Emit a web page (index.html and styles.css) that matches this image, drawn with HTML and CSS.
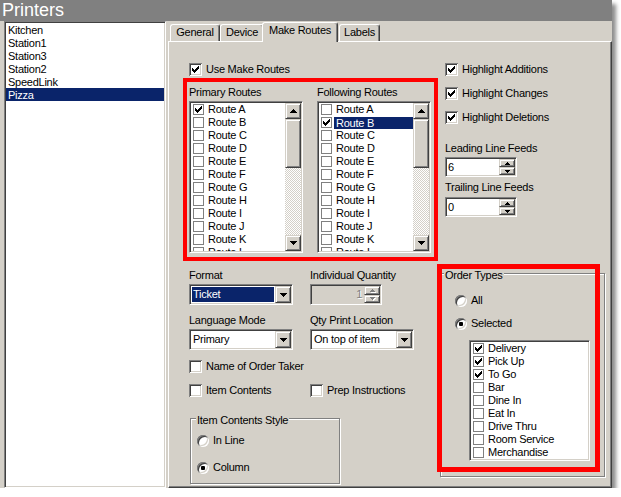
FILE: index.html
```html
<!DOCTYPE html>
<html>
<head>
<meta charset="utf-8">
<link rel="stylesheet" href="styles.css">
</head>
<body>
<div class="window">
  <div class="titlebar">Printers</div>
  <div class="main">
    <div class="printer-list sunken">
      <div class="li">Kitchen</div>
      <div class="li">Station1</div>
      <div class="li">Station3</div>
      <div class="li">Station2</div>
      <div class="li">SpeedLink</div>
      <div class="li sel">Pizza</div>
    </div>
    <div class="tabarea">
      <div class="tabs">
        <div class="tab t-general">General</div>
        <div class="tab t-device">Device</div>
        <div class="tab active t-routes">Make Routes</div>
        <div class="tab t-labels">Labels</div>
      </div>
      <div class="panel">
        <div class="col-left">
          <div class="chk-row use-routes">
            <span class="cb"><svg width="7" height="7" viewBox="0 0 7 7"><path d="M6 0h1v1h-1zM5 1h2v1h-2zM0 2h1v1h-1zM4 2h3v1h-3zM0 3h2v1h-2zM3 3h3v1h-3zM0 4h5v1h-5zM1 5h3v1h-3zM2 6h1v1h-1z"/></svg></span>
            <span>Use Make Routes</span>
          </div>
          <div class="routes-box">
            <div class="routes-col">
              <div class="lbl">Primary Routes</div>
              <div class="rlist sunken">
                <div class="items">
                  <div class="item"><span class="fcb"><svg width="7" height="7" viewBox="0 0 7 7"><path d="M6 0h1v1h-1zM5 1h2v1h-2zM0 2h1v1h-1zM4 2h3v1h-3zM0 3h2v1h-2zM3 3h3v1h-3zM0 4h5v1h-5zM1 5h3v1h-3zM2 6h1v1h-1z"/></svg></span><span class="itxt">Route A</span></div>
                  <div class="item"><span class="fcb"></span><span class="itxt">Route B</span></div>
                  <div class="item"><span class="fcb"></span><span class="itxt">Route C</span></div>
                  <div class="item"><span class="fcb"></span><span class="itxt">Route D</span></div>
                  <div class="item"><span class="fcb"></span><span class="itxt">Route E</span></div>
                  <div class="item"><span class="fcb"></span><span class="itxt">Route F</span></div>
                  <div class="item"><span class="fcb"></span><span class="itxt">Route G</span></div>
                  <div class="item"><span class="fcb"></span><span class="itxt">Route H</span></div>
                  <div class="item"><span class="fcb"></span><span class="itxt">Route I</span></div>
                  <div class="item"><span class="fcb"></span><span class="itxt">Route J</span></div>
                  <div class="item"><span class="fcb"></span><span class="itxt">Route K</span></div>
                  <div class="item"><span class="fcb"></span><span class="itxt">Route L</span></div>
                </div>
                <div class="scrollbar">
                  <div class="sb-btn raised"><svg width="7" height="4" viewBox="0 0 7 4"><path d="M3 0h1v1h-1zM2 1h3v1h-3zM1 2h5v1h-5zM0 3h7v1h-7z"/></svg></div>
                  <div class="sb-thumb raised"></div>
                  <div class="sb-track"></div>
                  <div class="sb-btn raised"><svg width="7" height="4" viewBox="0 0 7 4"><path d="M0 0h7v1h-7zM1 1h5v1h-5zM2 2h3v1h-3zM3 3h1v1h-1z"/></svg></div>
                </div>
              </div>
            </div>
            <div class="routes-col">
              <div class="lbl">Following Routes</div>
              <div class="rlist sunken">
                <div class="items">
                  <div class="item"><span class="fcb"></span><span class="itxt">Route A</span></div>
                  <div class="item"><span class="fcb"><svg width="7" height="7" viewBox="0 0 7 7"><path d="M6 0h1v1h-1zM5 1h2v1h-2zM0 2h1v1h-1zM4 2h3v1h-3zM0 3h2v1h-2zM3 3h3v1h-3zM0 4h5v1h-5zM1 5h3v1h-3zM2 6h1v1h-1z"/></svg></span><span class="itxt sel">Route B</span></div>
                  <div class="item"><span class="fcb"></span><span class="itxt">Route C</span></div>
                  <div class="item"><span class="fcb"></span><span class="itxt">Route D</span></div>
                  <div class="item"><span class="fcb"></span><span class="itxt">Route E</span></div>
                  <div class="item"><span class="fcb"></span><span class="itxt">Route F</span></div>
                  <div class="item"><span class="fcb"></span><span class="itxt">Route G</span></div>
                  <div class="item"><span class="fcb"></span><span class="itxt">Route H</span></div>
                  <div class="item"><span class="fcb"></span><span class="itxt">Route I</span></div>
                  <div class="item"><span class="fcb"></span><span class="itxt">Route J</span></div>
                  <div class="item"><span class="fcb"></span><span class="itxt">Route K</span></div>
                  <div class="item"><span class="fcb"></span><span class="itxt">Route L</span></div>
                </div>
                <div class="scrollbar">
                  <div class="sb-btn raised"><svg width="7" height="4" viewBox="0 0 7 4"><path d="M3 0h1v1h-1zM2 1h3v1h-3zM1 2h5v1h-5zM0 3h7v1h-7z"/></svg></div>
                  <div class="sb-thumb raised"></div>
                  <div class="sb-track"></div>
                  <div class="sb-btn raised"><svg width="7" height="4" viewBox="0 0 7 4"><path d="M0 0h7v1h-7zM1 1h5v1h-5zM2 2h3v1h-3zM3 3h1v1h-1z"/></svg></div>
                </div>
              </div>
            </div>
          </div>

          <div class="form">
            <div class="frow">
              <div class="field">
                <div class="lbl">Format</div>
                <div class="combo sunken">
                  <div class="val sel">Ticket</div>
                  <div class="dd raised"><svg width="7" height="4" viewBox="0 0 7 4"><path d="M0 0h7v1h-7zM1 1h5v1h-5zM2 2h3v1h-3zM3 3h1v1h-1z"/></svg></div>
                </div>
              </div>
              <div class="field">
                <div class="lbl">Individual Quantity</div>
                <div class="qspin sunken">
                  <div class="qval">1</div>
                  <div class="qbtns">
                    <div class="qbtn raised"><svg width="5" height="3" viewBox="0 0 5 3"><path d="M2 0h1v1h-1zM1 1h3v1h-3zM0 2h5v1h-5z"/></svg></div>
                    <div class="qbtn raised"><svg width="5" height="3" viewBox="0 0 5 3"><path d="M0 0h5v1h-5zM1 1h3v1h-3zM2 2h1v1h-1z"/></svg></div>
                  </div>
                </div>
              </div>
            </div>
            <div class="frow frow2">
              <div class="field">
                <div class="lbl">Language Mode</div>
                <div class="combo sunken">
                  <div class="val">Primary</div>
                  <div class="dd raised"><svg width="7" height="4" viewBox="0 0 7 4"><path d="M0 0h7v1h-7zM1 1h5v1h-5zM2 2h3v1h-3zM3 3h1v1h-1z"/></svg></div>
                </div>
              </div>
              <div class="field">
                <div class="lbl">Qty Print Location</div>
                <div class="combo sunken">
                  <div class="val">On top of item</div>
                  <div class="dd raised"><svg width="7" height="4" viewBox="0 0 7 4"><path d="M0 0h7v1h-7zM1 1h5v1h-5zM2 2h3v1h-3zM3 3h1v1h-1z"/></svg></div>
                </div>
              </div>
            </div>
            <div class="chk-row name-row">
              <span class="cb"></span><span>Name of Order Taker</span>
            </div>
            <div class="ic-row">
              <div class="chk-row"><span class="cb"></span><span>Item Contents</span></div>
              <div class="chk-row"><span class="cb"></span><span>Prep Instructions</span></div>
            </div>
          </div>

          <div class="group ics">
            <div class="gtitle">Item Contents Style</div>
            <div class="radio-row r-first"><span class="radio"></span><span>In Line</span></div>
            <div class="radio-row r-second"><span class="radio on"><span class="dot"></span></span><span>Column</span></div>
          </div>
        </div>

        <div class="col-right">
          <div class="chk-row hl"><span class="cb"><svg width="7" height="7" viewBox="0 0 7 7"><path d="M6 0h1v1h-1zM5 1h2v1h-2zM0 2h1v1h-1zM4 2h3v1h-3zM0 3h2v1h-2zM3 3h3v1h-3zM0 4h5v1h-5zM1 5h3v1h-3zM2 6h1v1h-1z"/></svg></span><span>Highlight Additions</span></div>
          <div class="chk-row hl hl-next"><span class="cb"><svg width="7" height="7" viewBox="0 0 7 7"><path d="M6 0h1v1h-1zM5 1h2v1h-2zM0 2h1v1h-1zM4 2h3v1h-3zM0 3h2v1h-2zM3 3h3v1h-3zM0 4h5v1h-5zM1 5h3v1h-3zM2 6h1v1h-1z"/></svg></span><span>Highlight Changes</span></div>
          <div class="chk-row hl hl-next"><span class="cb"><svg width="7" height="7" viewBox="0 0 7 7"><path d="M6 0h1v1h-1zM5 1h2v1h-2zM0 2h1v1h-1zM4 2h3v1h-3zM0 3h2v1h-2zM3 3h3v1h-3zM0 4h5v1h-5zM1 5h3v1h-3zM2 6h1v1h-1z"/></svg></span><span>Highlight Deletions</span></div>

          <div class="feed-lbl">Leading Line Feeds</div>
          <div class="fspin sunken">
            <div class="fval">6</div>
            <div class="fbtns">
              <div class="fbtn raised"><svg width="5" height="3" viewBox="0 0 5 3"><path d="M2 0h1v1h-1zM1 1h3v1h-3zM0 2h5v1h-5z"/></svg></div>
              <div class="fbtn raised"><svg width="5" height="3" viewBox="0 0 5 3"><path d="M0 0h5v1h-5zM1 1h3v1h-3zM2 2h1v1h-1z"/></svg></div>
            </div>
          </div>
          <div class="feed-lbl feed-lbl2">Trailing Line Feeds</div>
          <div class="fspin fspin2 sunken">
            <div class="fval">0</div>
            <div class="fbtns">
              <div class="fbtn raised"><svg width="5" height="3" viewBox="0 0 5 3"><path d="M2 0h1v1h-1zM1 1h3v1h-3zM0 2h5v1h-5z"/></svg></div>
              <div class="fbtn raised"><svg width="5" height="3" viewBox="0 0 5 3"><path d="M0 0h5v1h-5zM1 1h3v1h-3zM2 2h1v1h-1z"/></svg></div>
            </div>
          </div>

          <div class="group order-box">
            <div class="gtitle">Order Types</div>
            <div class="radio-row o-all"><span class="radio"></span><span>All</span></div>
            <div class="radio-row o-sel"><span class="radio on"><span class="dot"></span></span><span>Selected</span></div>
            <div class="olist sunken">
              <div class="item"><span class="fcb"><svg width="7" height="7" viewBox="0 0 7 7"><path d="M6 0h1v1h-1zM5 1h2v1h-2zM0 2h1v1h-1zM4 2h3v1h-3zM0 3h2v1h-2zM3 3h3v1h-3zM0 4h5v1h-5zM1 5h3v1h-3zM2 6h1v1h-1z"/></svg></span><span class="itxt">Delivery</span></div>
              <div class="item"><span class="fcb"><svg width="7" height="7" viewBox="0 0 7 7"><path d="M6 0h1v1h-1zM5 1h2v1h-2zM0 2h1v1h-1zM4 2h3v1h-3zM0 3h2v1h-2zM3 3h3v1h-3zM0 4h5v1h-5zM1 5h3v1h-3zM2 6h1v1h-1z"/></svg></span><span class="itxt">Pick Up</span></div>
              <div class="item"><span class="fcb"><svg width="7" height="7" viewBox="0 0 7 7"><path d="M6 0h1v1h-1zM5 1h2v1h-2zM0 2h1v1h-1zM4 2h3v1h-3zM0 3h2v1h-2zM3 3h3v1h-3zM0 4h5v1h-5zM1 5h3v1h-3zM2 6h1v1h-1z"/></svg></span><span class="itxt">To Go</span></div>
              <div class="item"><span class="fcb"></span><span class="itxt">Bar</span></div>
              <div class="item"><span class="fcb"></span><span class="itxt">Dine In</span></div>
              <div class="item"><span class="fcb"></span><span class="itxt">Eat In</span></div>
              <div class="item"><span class="fcb"></span><span class="itxt">Drive Thru</span></div>
              <div class="item"><span class="fcb"></span><span class="itxt">Room Service</span></div>
              <div class="item"><span class="fcb"></span><span class="itxt">Merchandise</span></div>
            </div>
            <div class="red-ann"></div>
          </div>
        </div>
      </div>
    </div>
  </div>
</div>
</body>
</html>
```

FILE: styles.css
```css
* { box-sizing: border-box; }

body {
  margin: 0;
  background: #fff;
  font-family: "Liberation Sans", Arial, sans-serif;
  font-size: 11px;
  letter-spacing: -0.25px;
  color: #000;
}

svg { display: block; shape-rendering: crispEdges; }

.window {
  width: 612px;
  height: 488px;
  background: #d4d0c8;
  display: flex;
  flex-direction: column;
  box-shadow: 4px 4px 4px rgba(0, 0, 0, 0.45);
}

.titlebar {
  height: 21px;
  background: #808080;
  color: #fff;
  font-size: 18px;
  line-height: 21px;
  padding-left: 2px;
  letter-spacing: 0;
}

.main {
  flex: 1;
  display: flex;
  min-height: 0;
}

.sunken {
  border: 1px solid;
  border-color: #808080 #fff #fff #808080;
  box-shadow: inset 1px 1px #404040, inset -1px -1px #d4d0c8;
  padding: 1px;
  background: #fff;
}

.raised {
  border: 1px solid;
  border-color: #d4d0c8 #404040 #404040 #d4d0c8;
  box-shadow: inset 1px 1px #fff, inset -1px -1px #808080;
  background: #d4d0c8;
}

/* left printer list */
.printer-list {
  width: 162px;
  margin-left: 4px;
}
.printer-list .li {
  height: 13px;
  line-height: 13px;
  padding-left: 2px;
  padding-top: 1px;
  white-space: nowrap;
}
.printer-list .li.sel {
  background: #0a246a;
  color: #fff;
}

/* tabs */
.tabarea {
  flex: 1;
  margin-left: 2px;
  display: flex;
  flex-direction: column;
  min-width: 0;
}
.tabs {
  height: 20px;
  flex: none;
  display: flex;
  align-items: flex-start;
  padding-left: 2px;
}
.tab {
  margin-top: 3px;
  height: 17px;
  border: 1px solid;
  border-bottom: none;
  border-color: #fff #404040 transparent #fff;
  box-shadow: inset -1px 0 #808080;
  border-radius: 3px 3px 0 0;
  text-align: center;
  line-height: 13px;
  padding-top: 1px;
  white-space: nowrap;
}
.t-general { width: 50px; }
.t-device { width: 44px; }
.t-routes { width: 76px; margin-left: -2px; }
.t-labels { width: 41px; margin-left: 1px; }
.tab.active {
  margin-top: 1px;
  height: 20px;
  position: relative;
  z-index: 1;
  background: #d4d0c8;
}

.panel {
  flex: 1;
  border: 1px solid;
  border-color: #fff #404040 #404040 #fff;
  box-shadow: inset -1px -1px #808080;
  display: grid;
  grid-template-columns: 255px 166px;
  column-gap: 2px;
  padding: 21px 0 0 14px;
  align-items: start;
}

/* checkbox */
.chk-row {
  display: flex;
  align-items: center;
  gap: 4px;
  height: 13px;
  line-height: 13px;
  white-space: nowrap;
}
.cb {
  flex: none;
  width: 13px;
  height: 13px;
  background: #fff;
  box-shadow: inset 1px 1px #808080, inset -1px -1px #fff, inset 2px 2px #404040, inset -2px -2px #d4d0c8;
  padding: 3px;
}
.fcb {
  flex: none;
  width: 11px;
  height: 11px;
  border: 1px solid #808080;
  background: #fff;
  padding: 1px;
  margin: 0 2px 0 2px;
}

/* routes */
.use-routes { margin-left: 6px; }
.routes-box {
  margin-top: 2px;
  border: 4px solid #ff0000;
  height: 183px;
  padding: 3px 3px 0 2px;
  display: grid;
  grid-template-columns: 114px 114px;
  column-gap: 14px;
}
.lbl {
  height: 16px;
  line-height: 13px;
  padding-top: 1px;
  white-space: nowrap;
}
.rlist {
  height: 152px;
  display: flex;
  overflow: hidden;
}
.items {
  flex: 1;
  overflow: hidden;
  min-width: 0;
}
.item {
  height: 13px;
  display: flex;
  align-items: center;
  white-space: nowrap;
}
.itxt {
  flex: 1;
  height: 13px;
  line-height: 13px;
  padding-left: 2px;
}
.itxt.sel {
  background: #0a246a;
  color: #fff;
  height: 12px;
  line-height: 12px;
}

.scrollbar {
  width: 16px;
  flex: none;
  display: flex;
  flex-direction: column;
}
.sb-btn {
  height: 16px;
  flex: none;
  display: flex;
  align-items: center;
  justify-content: center;
}
.sb-thumb {
  height: 49px;
  flex: none;
}
.sb-track {
  flex: 1;
  background: repeating-conic-gradient(#d4d0c8 0 25%, #fff 0 50%) 0 0 / 2px 2px;
}

/* format form */
.form {
  margin-left: 6px;
  margin-top: 7px;
}
.frow {
  display: grid;
  grid-template-columns: 121px 104px;
}
.frow2 { margin-top: 8px; }
.combo {
  width: 104px;
  height: 21px;
  display: flex;
}
.combo .val {
  flex: 1;
  line-height: 17px;
  padding-left: 2px;
  white-space: nowrap;
  overflow: hidden;
}
.combo .val.sel {
  margin: 1px 1px 1px 1px;
  line-height: 15px;
  padding-left: 1px;
  background: #0a246a;
  color: #fff;
}
.dd {
  width: 16px;
  height: 17px;
  flex: none;
  display: flex;
  align-items: center;
  justify-content: center;
}
.qspin {
  width: 72px;
  height: 21px;
  display: flex;
  background: #d4d0c8;
}
.qval {
  flex: 1;
  text-align: right;
  line-height: 17px;
  padding-right: 2px;
  color: #808080;
  text-shadow: 1px 1px #fff;
}
.qbtns, .fbtns {
  width: 16px;
  flex: none;
  display: flex;
  flex-direction: column;
}
.qbtn, .fbtn {
  flex: 1;
  display: flex;
  align-items: center;
  justify-content: center;
}
.qbtn svg { fill: #808080; filter: drop-shadow(1px 1px 0 #fff); }

.name-row { margin-top: 10px; }
.ic-row {
  margin-top: 11px;
  display: grid;
  grid-template-columns: 121px auto;
}

/* group boxes */
.group {
  border: 1px solid #808080;
  box-shadow: inset 1px 1px #fff, 1px 1px 0 #fff;
}
.gtitle {
  width: max-content;
  margin-top: -5px;
  padding: 0 1px;
  background: #d4d0c8;
  line-height: 13px;
  height: 13px;
}
.ics {
  margin-left: 7px;
  margin-top: 21px;
  width: 150px;
  height: 66px;
}
.ics .gtitle { margin-left: 5px; }
.radio-row {
  display: flex;
  align-items: center;
  gap: 4px;
  height: 13px;
  line-height: 13px;
  white-space: nowrap;
}
.ics .radio-row { padding-left: 6px; }
.r-first { margin-top: 7px; }
.r-second { margin-top: 14px; }
.radio {
  flex: none;
  width: 12px;
  height: 12px;
  border-radius: 50%;
  background: #fff;
  box-shadow: inset 1px 1px #808080, inset -1px -1px #fff, inset 2px 2px #404040, inset -2px -2px #d4d0c8;
  display: flex;
  align-items: center;
  justify-content: center;
}
.dot {
  width: 4px;
  height: 4px;
  border-radius: 1px;
  background: #000;
}

/* right column */
.col-right > .hl { padding-left: 5px; }
.hl-next { margin-top: 11px; }
.feed-lbl {
  margin-top: 18px;
  padding-left: 5px;
  line-height: 13px;
  height: 13px;
}
.feed-lbl2 { margin-top: 4px; }
.fspin {
  margin-left: 5px;
  margin-top: 2px;
  width: 72px;
  height: 20px;
  display: flex;
}
.fspin2 { margin-top: 3px; }
.fval {
  flex: 1;
  line-height: 16px;
  padding-left: 1px;
}

.order-box {
  position: relative;
  margin-top: 56px;
  width: 165px;
  height: 204px;
}
.order-box .gtitle { margin-left: 3px; }
.order-box .radio-row { padding-left: 14px; }
.o-all { margin-top: 12px; }
.o-sel { margin-top: 10px; }
.olist {
  margin-top: 10px;
  margin-left: 28px;
  width: 121px;
  height: 121px;
  overflow: hidden;
}
.red-ann {
  position: absolute;
  left: -4px;
  top: -10px;
  width: 163px;
  height: 208px;
  border: 5px solid #ff0000;
}
```
